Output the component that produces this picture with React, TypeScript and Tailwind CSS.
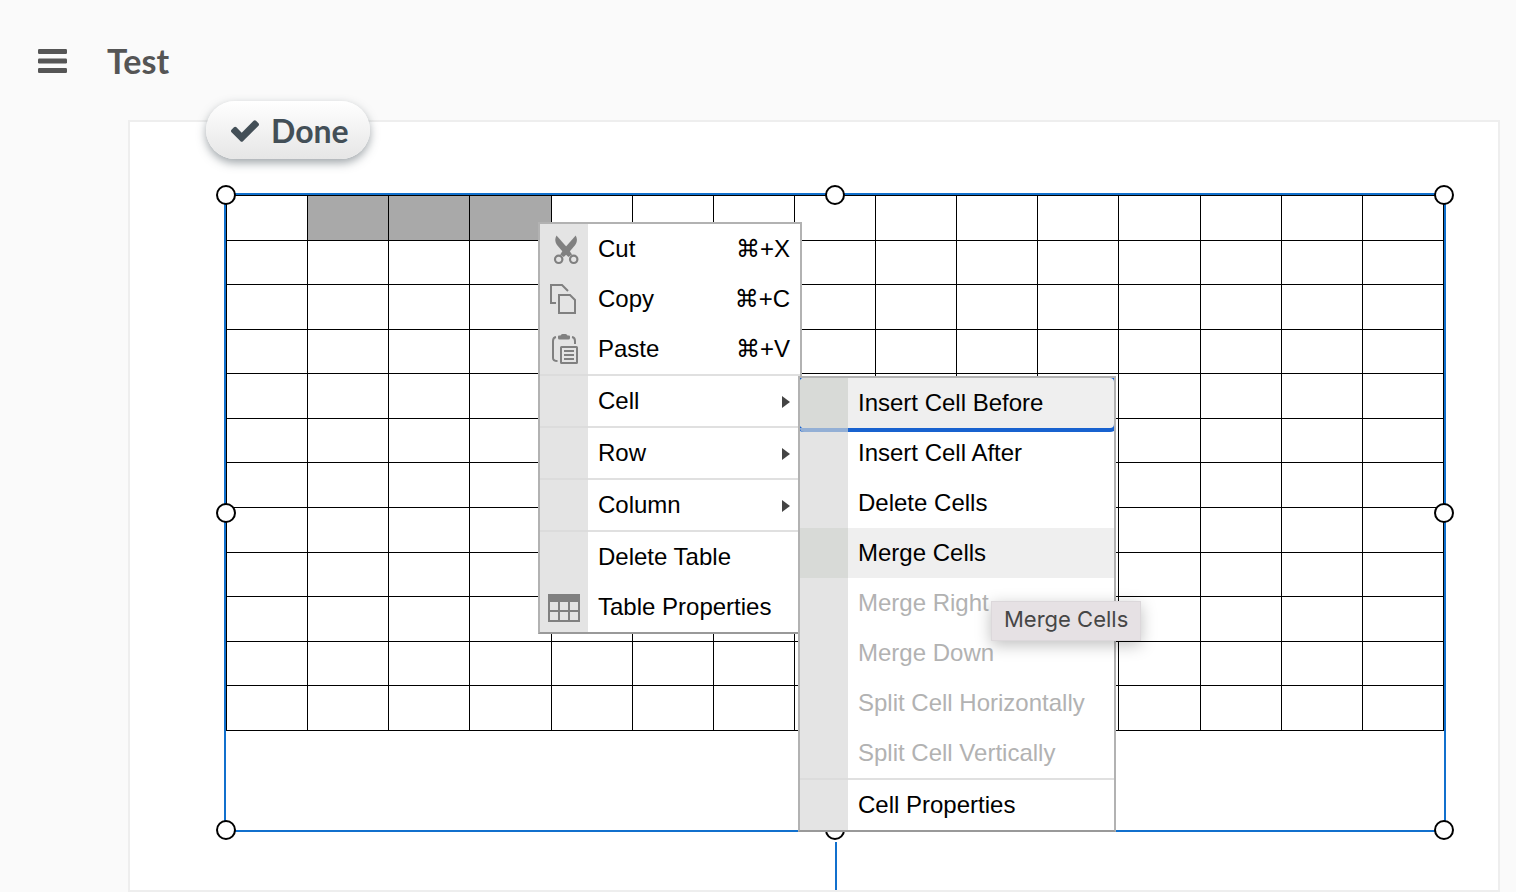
import React from "react";
import clsx from "clsx";

const ROWS = 12;
const COLUMNS = 15;

function CutIcon() {
  return (
    <svg width="32" height="32" viewBox="0 0 32 32" fill="none">
      <path d="M8.500 2.500C6.500 6 7.200 9.500 9 12L14.500 18.500L20.500 24L24 21.500L20 15.500Z" fill="#808080" />
      <path d="M27.700 2.500C29.700 6 29 9.500 27.200 12L21.700 18.500L15.700 24L12.200 21.500L16.200 15.500Z" fill="#808080" />
      <circle cx="10.700" cy="26.300" r="3.700" fill="#e4e4e4" stroke="#808080" strokeWidth="2.200" />
      <circle cx="25.700" cy="26.300" r="3.700" fill="#e4e4e4" stroke="#808080" strokeWidth="2.200" />
    </svg>
  );
}

function CopyIcon() {
  return (
    <svg width="32" height="32" viewBox="0 0 32 32" fill="none" stroke="#808080" strokeWidth="2">
      <path d="M8 20H3V2H14L20 8" />
      <path d="M11 12H22L27 17V30H11Z" />
    </svg>
  );
}

function PasteIcon() {
  return (
    <svg width="32" height="32" viewBox="0 0 32 32" fill="none" stroke="#808080" strokeWidth="2">
      <path d="M8 4Q5 4.500 5 8V25Q5 28 9.500 28M24 4Q27 4.500 27 8V11" />
      <path d="M10 3.500Q10 2.500 11 2.500H12.500Q13 1 14.500 1H17.500Q19 1 19.500 2.500H21Q22 2.500 22 3.500V5Q22 6.500 20.500 6.500H11.500Q10 6.500 10 5Z" fill="#808080" stroke="none" />
      <rect x="13" y="14" width="16" height="16" rx="0.500" />
      <path d="M16 18H26M16 22H26M16 26H26" />
    </svg>
  );
}

function TableIcon() {
  return (
    <svg width="32" height="32" viewBox="0 0 32 32" fill="none" stroke="#808080" strokeWidth="2">
      <rect x="1" y="4" width="30" height="26" />
      <path d="M0 3H32V11H0Z" fill="#808080" stroke="none" />
      <path d="M1 20H31M11 11V30M21 11V30" />
    </svg>
  );
}

interface MenuItemProps {
  label: string;
  icon?: React.ReactNode;
  shortcut?: string;
  focused?: boolean;
  hovered?: boolean;
  disabled?: boolean;
  hasSubmenu?: boolean;
  children?: React.ReactNode;
}

function MenuItem({
  label,
  icon,
  shortcut,
  focused,
  hovered,
  disabled,
  hasSubmenu,
  children,
}: MenuItemProps) {
  const active = focused || hovered;

  return (
    <li
      role="none"
      className={clsx("relative", focused && "z-10 -mb-1 overflow-hidden pb-1")}
    >
      <button
        type="button"
        role="menuitem"
        disabled={disabled}
        aria-haspopup={hasSubmenu ? "menu" : undefined}
        className={clsx(
          "relative flex h-[50px] w-full items-center text-left",
          active ? "bg-[#efefef]" : "bg-white",
          disabled ? "text-[#b2b2b2]" : "text-black",
          focused && "rounded shadow-[0_0_0_4px_#1862cf]"
        )}
      >
        <span
          className={clsx(
            "flex w-12 shrink-0 items-center justify-center self-stretch",
            active ? "bg-[#d8dad7]" : "bg-[#e4e4e4]",
            focused && "rounded-l"
          )}
        >
          {icon}
        </span>
        <span className="grow whitespace-nowrap px-2.5">{label}</span>
        {shortcut && <span className="pr-2.5">{shortcut}</span>}
        {hasSubmenu && (
          <svg className="mr-2.5" width="8" height="16" viewBox="0 0 8 16">
            <path d="M0 3L8 9L0 15Z" fill="#444" />
          </svg>
        )}
        {focused && (
          <span className="absolute -bottom-1 left-0 h-1 w-12 rounded-bl bg-[#93afd5]" />
        )}
      </button>
      {children}
    </li>
  );
}

function Separator() {
  return (
    <li role="separator" className="flex h-0.5 bg-[#e0e0e0]">
      <span className="w-12 bg-[#dcdcdc]" />
    </li>
  );
}

function CellSubmenu() {
  return (
    <ul
      role="menu"
      aria-label="Cell"
      className="absolute top-0 left-[258px] z-20 w-[318px] border-2 border-[#b2b2b2] border-b-[#999] bg-white"
    >
      <MenuItem label="Insert Cell Before" focused />
      <MenuItem label="Insert Cell After" />
      <MenuItem label="Delete Cells" />
      <MenuItem label="Merge Cells" hovered>
        <div
          role="tooltip"
          className="absolute top-[73px] left-[191px] z-30 border border-[#dcd8db] bg-[#e6e1e4] px-3 pt-0.5 pb-1.5 font-['Inter',sans-serif] text-[22px] leading-[30px] whitespace-nowrap text-[#464646] shadow-[0_4px_16px_rgba(0,0,0,0.25)]"
        >
          Merge Cells
        </div>
      </MenuItem>
      <MenuItem label="Merge Right" disabled />
      <MenuItem label="Merge Down" disabled />
      <MenuItem label="Split Cell Horizontally" disabled />
      <MenuItem label="Split Cell Vertically" disabled />
      <Separator />
      <MenuItem label="Cell Properties" />
    </ul>
  );
}

function ContextMenu() {
  return (
    <ul
      role="menu"
      aria-label="Table"
      className="absolute top-[100px] left-[408px] z-10 w-[264px] border-2 border-[#b2b2b2] border-b-[#999] bg-white font-['Liberation_Sans','DejaVu_Sans',sans-serif] text-2xl"
    >
      <MenuItem label="Cut" icon={<CutIcon />} shortcut="⌘+X" />
      <MenuItem label="Copy" icon={<CopyIcon />} shortcut="⌘+C" />
      <MenuItem label="Paste" icon={<PasteIcon />} shortcut="⌘+V" />
      <Separator />
      <MenuItem label="Cell" hasSubmenu>
        <CellSubmenu />
      </MenuItem>
      <Separator />
      <MenuItem label="Row" hasSubmenu />
      <Separator />
      <MenuItem label="Column" hasSubmenu />
      <Separator />
      <MenuItem label="Delete Table" />
      <MenuItem label="Table Properties" icon={<TableIcon />} />
    </ul>
  );
}

// resize handles, centred on the inner corners and edges of the frame
const handles = [
  "top-0 left-0",
  "top-0 left-1/2",
  "top-0 left-full",
  "top-1/2 left-0",
  "top-1/2 left-full",
  "top-full left-0",
  "top-full left-1/2",
  "top-full left-full",
];

function TableFrame() {
  return (
    <div className="relative mt-[71px] mr-[52px] ml-[94px] border-2 border-[#1170cd] pb-[99px]">
      <table className="h-[536px] w-full table-fixed border-collapse border border-black">
        <tbody>
          {Array.from({ length: ROWS }, (_, row) => (
            <tr key={row}>
              {Array.from({ length: COLUMNS }, (_, col) => (
                <td
                  key={col}
                  className={clsx(
                    "border border-black p-0",
                    row === 0 && col >= 1 && col <= 3 && "bg-[#a9a9a9]"
                  )}
                />
              ))}
            </tr>
          ))}
        </tbody>
      </table>
      {handles.map((position) => (
        <span
          key={position}
          className={clsx(
            "absolute size-5 -translate-1/2 rounded-full border-2 border-black bg-white",
            position
          )}
        />
      ))}
    </div>
  );
}

export default function App() {
  return (
    <div className="bg-[#fafafa] font-['Lato',sans-serif]">
      <header className="flex h-[120px] items-center gap-10 pt-0.5 pl-[38px]">
        <button type="button" aria-label="Menu">
          <svg width="29" height="24" viewBox="0 0 29 24" fill="#555">
            <rect width="29" height="5" rx="1.200" />
            <rect y="9.500" width="29" height="5" rx="1.200" />
            <rect y="19" width="29" height="5" rx="1.200" />
          </svg>
        </button>
        <h1 className="text-[34px] leading-10 font-bold text-[#555]">Test</h1>
      </header>

      <main className="relative mr-4 ml-32 border-2 border-[#eee] bg-white">
        <button
          type="button"
          className="absolute -top-[21px] left-[76px] z-10 flex h-[58px] items-center gap-3 rounded-full bg-linear-to-b from-white to-[#e6e6e6] pt-0.5 pr-[21px] pl-[25px] text-[32px] font-bold text-[#434f57] shadow-[0_4px_10px_rgba(67,79,87,0.5)]"
        >
          <svg width="28" height="22" viewBox="121 334 1550 1188" fill="currentColor">
            <path d="M1671 566q0 40-28 68l-724 724-136 136q-28 28-68 28t-68-28l-136-136-362-362q-28-28-28-68t28-68l136-136q28-28 68-28t68 28l294 295 656-657q28-28 68-28t68 28l136 136q28 28 28 68z" />
          </svg>
          Done
        </button>
        <TableFrame />
        <ContextMenu />
        {/* stem of the rotate handle */}
        <div className="mt-2.5 mr-[50px] ml-[94px] flex h-12 justify-center">
          <span className="w-0.5 bg-[#1170cd]" />
        </div>
      </main>
    </div>
  );
}
